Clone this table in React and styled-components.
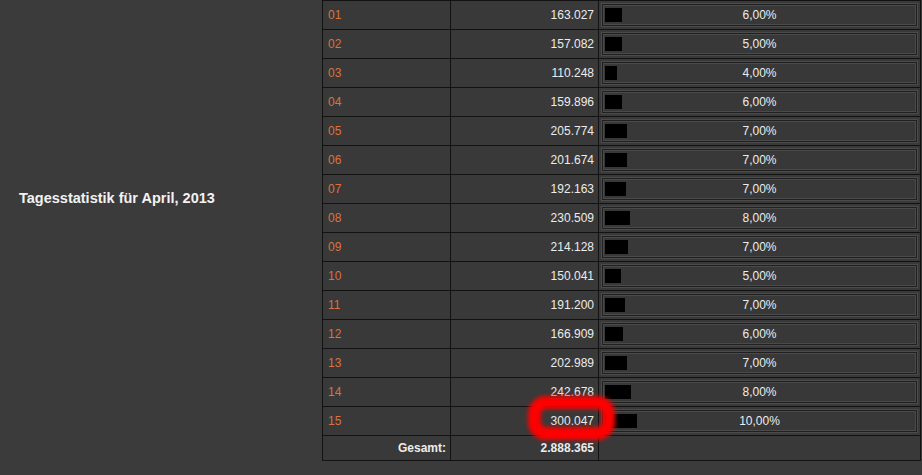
import React from "react";
import styled, { createGlobalStyle } from "styled-components";

const GlobalStyle = createGlobalStyle`
  html, body {
    margin: 0;
    padding: 0;
    background: #3b3b3b;
    font-family: "Liberation Sans", Arial, sans-serif;
  }
`;

const Page = styled.div`
  position: relative;
  display: flex;
  width: 922px;
  height: 475px;
  overflow: hidden;
  background: #3b3b3b;
`;

const Side = styled.div`
  width: 322px;
  flex: none;
  padding: 190px 0 0 19px;
  box-sizing: border-box;
`;

const Title = styled.h2`
  margin: 0;
  color: #f2f2f2;
  font-size: 14.5px;
  font-weight: bold;
  line-height: 16px;
`;

const StatGrid = styled.div`
  display: grid;
  grid-template-columns: 128px 148px 322px;
  align-self: flex-start;
  border-left: 1px solid #121212;
  border-top: 1px solid #121212;
  font-size: 12px;
  color: #ececec;
`;

const Cell = styled.div`
  box-sizing: border-box;
  display: flex;
  align-items: center;
  justify-content: ${({ $align }) => ($align === "right" ? "flex-end" : "flex-start")};
  padding: 0 ${({ $pad }) => $pad || "5px"};
  border-right: 1px solid #121212;
  border-bottom: 1px solid #121212;
  background: #393939;
  font-weight: ${({ $bold }) => ($bold ? "bold" : "normal")};
  color: ${({ $accent }) => ($accent ? "#d9733b" : "#ececec")};
  white-space: nowrap;
  height: ${({ $short }) => ($short ? "25px" : "29px")};
`;

const BarBox = styled.div`
  flex: 1;
  display: grid;
  height: 18px;
  padding: 1px;
  border: 1px solid #202020;
  box-shadow: 0 0 0 1px #4b4b4b, inset 0 0 0 1px #4a4a4a;
  background: #383838;
`;

const BarFill = styled.div`
  grid-area: 1 / 1;
  height: 14px;
  align-self: center;
  margin-left: 1px;
  background: #000;
`;

const BarLabel = styled.span`
  grid-area: 1 / 1;
  align-self: center;
  justify-self: center;
  line-height: 14px;
  color: #ececec;
`;

const Highlight = styled.div`
  position: absolute;
  left: 528px;
  top: 396px;
  width: 87px;
  height: 44px;
  box-sizing: border-box;
  border: 13px solid #ff0000;
  border-radius: 18px;
  filter: blur(2px);
  pointer-events: none;
`;

const rows = [
  ["01", 163027, "6,00%"],
  ["02", 157082, "5,00%"],
  ["03", 110248, "4,00%"],
  ["04", 159896, "6,00%"],
  ["05", 205774, "7,00%"],
  ["06", 201674, "7,00%"],
  ["07", 192163, "7,00%"],
  ["08", 230509, "8,00%"],
  ["09", 214128, "7,00%"],
  ["10", 150041, "5,00%"],
  ["11", 191200, "7,00%"],
  ["12", 166909, "6,00%"],
  ["13", 202989, "7,00%"],
  ["14", 242678, "8,00%"],
  ["15", 300047, "10,00%"],
];

const total = 2888365;
const fmt = (n) => n.toLocaleString("de-DE");

export default function App() {
  return (
    <Page>
      <GlobalStyle />
      <Side>
        <Title>Tagesstatistik für April, 2013</Title>
      </Side>
      <StatGrid>
        {rows.map(([day, value, pct]) => (
          <React.Fragment key={day}>
            <Cell $accent>{day}</Cell>
            <Cell $align="right" $pad="4px">{fmt(value)}</Cell>
            <Cell $pad="3px">
              <BarBox>
                <BarFill style={{ width: Math.round((value / total) * 309) }} />
                <BarLabel>{pct}</BarLabel>
              </BarBox>
            </Cell>
          </React.Fragment>
        ))}
        <Cell $align="right" $bold $pad="4px" $short>Gesamt:</Cell>
        <Cell $align="right" $bold $pad="4px" $short>{fmt(total)}</Cell>
        <Cell $short />
      </StatGrid>
      <Highlight />
    </Page>
  );
}
